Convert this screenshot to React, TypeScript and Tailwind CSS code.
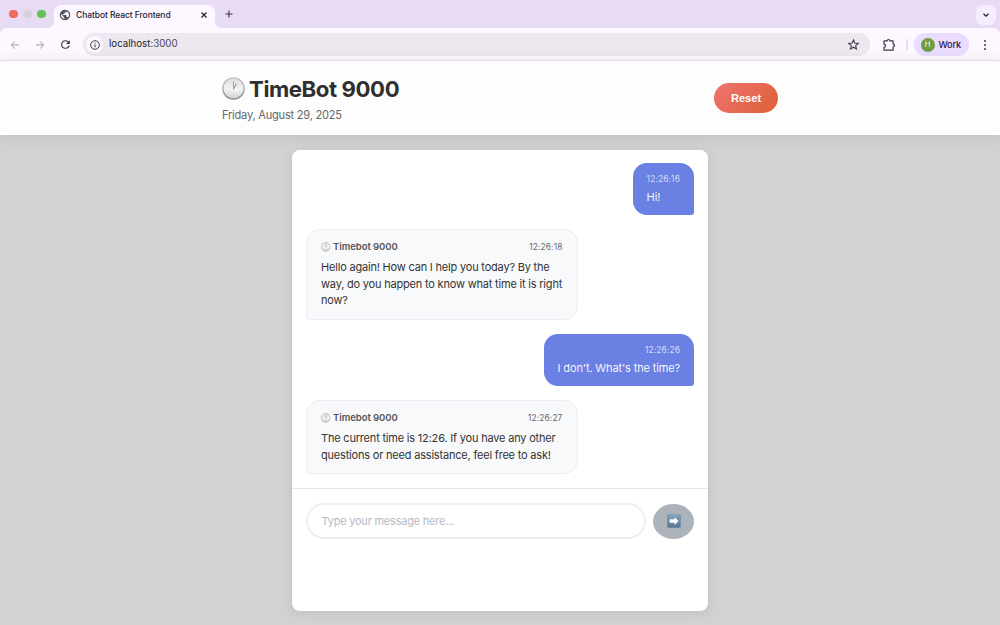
import React from "react";

function Clock({ className }: { className: string }) {
  return (
    <svg viewBox="0 0 24 24" className={className} aria-hidden="true">
      <defs>
        <linearGradient id="clockRim" x1="0" y1="0" x2="0" y2="1">
          <stop offset="0" stopColor="#c2c2c4" />
          <stop offset="1" stopColor="#85858a" />
        </linearGradient>
        <linearGradient id="clockFace" x1="0" y1="0" x2="0" y2="1">
          <stop offset="0" stopColor="#dddddf" />
          <stop offset="0.55" stopColor="#f4f4f5" />
          <stop offset="1" stopColor="#cfcfd2" />
        </linearGradient>
      </defs>
      <circle cx="12" cy="12" r="11.7" fill="url(#clockRim)" />
      <circle cx="12" cy="12" r="10.5" fill="url(#clockFace)" />
      <path d="M12 12.4V5" stroke="#929296" strokeWidth="0.8" strokeLinecap="round" />
      <path d="M12 12.4l2.700-4.900" stroke="#929296" strokeWidth="1.100" strokeLinecap="round" />
    </svg>
  );
}

function Globe() {
  return (
    <svg viewBox="0 0 24 24" className="size-[12px] shrink-0">
      <path
        fill="#50555c"
        d="M12 2C6.48 2 2 6.48 2 12s4.480 10 10 10 10-4.480 10-10S17.520 2 12 2zm-1 17.930c-3.950-.49-7-3.850-7-7.930 0-.62.080-1.210.21-1.790L9 15v1c0 1.100.9 2 2 2v1.930zm6.900-2.540c-.26-.81-1-1.390-1.900-1.390h-1v-3c0-.55-.45-1-1-1H8v-2h2c.55 0 1-.45 1-1V7h2c1.100 0 2-.9 2-2v-.41c2.930 1.190 5 4.060 5 7.410 0 2.080-.8 3.970-2.100 5.390z"
      />
      <circle cx="12" cy="12" r="9.500" fill="none" stroke="#50555c" strokeWidth="2" />
    </svg>
  );
}

function TabStrip() {
  return (
    <div className="flex h-7 items-start bg-[#e8dcf5] text-[#241d30]">
      <div className="flex h-7 w-[54px] shrink-0 items-center gap-[5.500px] pl-[9px]">
        <i className="size-[8.500px] rounded-full bg-[#ed6a5f]" />
        <i className="size-[8.500px] rounded-full bg-[#d8d1dc]" />
        <i className="size-[8.500px] rounded-full bg-[#61c454]" />
      </div>
      <div className="relative mt-[5px] flex h-[23px] w-[161px] shrink-0 items-center rounded-t-[7px] bg-[#fdf7ff] pr-[7px] pb-[4px] pl-[5px]">
        <svg viewBox="0 0 6 6" className="absolute bottom-0 -left-[6px] size-[6px]">
          <path d="M6 0V6H0A6 6 0 0 0 6 0Z" fill="#fdf7ff" />
        </svg>
        <svg viewBox="0 0 6 6" className="absolute -right-[6px] bottom-0 size-[6px]">
          <path d="M0 0V6H6A6 6 0 0 1 0 0Z" fill="#fdf7ff" />
        </svg>
        <Globe />
        <span className="ml-[5px] flex-1 pt-px text-[8.500px] font-medium tracking-[-0.080px] whitespace-nowrap">Chatbot React Frontend</span>
        <svg viewBox="0 0 8 8" className="size-[8px]">
          <path d="M1.500 1.500l5 5m0-5l-5 5" stroke="#241d30" strokeWidth="1.150" />
        </svg>
      </div>
      <svg viewBox="0 0 10 10" className="mt-[9px] ml-[9px] size-[10px]">
        <path d="M5 1.500v7M1.500 5h7" stroke="#3c3348" strokeWidth="1.100" />
      </svg>
      <div className="mt-[5px] mr-[4px] ml-auto flex size-[20px] items-center justify-center rounded-[7px] bg-[#f6edff]">
        <svg viewBox="0 0 8 8" className="size-[8px]">
          <path d="M1.500 2.800L4 5.200l2.500-2.400" fill="none" stroke="#241d30" strokeWidth="1.200" />
        </svg>
      </div>
    </div>
  );
}

function Toolbar() {
  return (
    <div className="h-[33px] shrink-0 bg-[#e8dcf5]">
      <div className="flex h-full items-center rounded-t-[7px] border-b border-[#ebe3ee] bg-[#fdf7ff] pt-px pr-[13px] pl-[10px]">
        <svg viewBox="0 0 10 10" className="size-[10px]">
          <path d="M9 5H1.500M5 1.300L1.300 5 5 8.700" fill="none" stroke="#a39ca9" strokeWidth="1" />
        </svg>
        <svg viewBox="0 0 10 10" className="ml-[15px] size-[10px]">
          <path d="M1 5h7.500M5 1.300L8.700 5 5 8.700" fill="none" stroke="#a39ca9" strokeWidth="1" />
        </svg>
        <svg viewBox="0 0 24 24" className="ml-[14px] size-[13px]">
          <path
            fill="#3c3744"
            d="M17.650 6.350A7.958 7.958 0 0 0 12 4a8 8 0 1 0 7.730 10h-2.080A6 6 0 1 1 12 6c1.660 0 3.140.69 4.220 1.780L13 11h7V4l-2.350 2.350z"
          />
        </svg>
        <div className="ml-[11px] flex h-[23px] w-[787px] items-center rounded-full bg-[#ede7f0] pr-[10px] pl-[3px]">
          <span className="flex size-[17px] items-center justify-center rounded-full bg-[#fdf7ff]">
            <svg viewBox="0 0 10 10" className="size-[10px]">
              <circle cx="5" cy="5" r="4.300" fill="none" stroke="#29252f" strokeWidth="0.900" />
              <path d="M5 4.500v2.800M5 2.600v1" stroke="#29252f" strokeWidth="1" />
            </svg>
          </span>
          <span className="ml-[6px] flex-1 text-[9.700px] text-[#211d28]">
            localhost<span className="text-[#4c4752]">:3000</span>
          </span>
          <svg viewBox="0 0 24 24" className="size-[13px]">
            <path
              d="M12 3.500l2.500 5.900 6.400.5-4.900 4.200 1.500 6.200L12 17l-5.500 3.300L8 14.100 3.100 9.900l6.400-.5z"
              fill="none"
              stroke="#3c3744"
              strokeWidth="1.900"
            />
          </svg>
        </div>
        <svg viewBox="0 0 14 14" className="ml-[12px] size-[14px]">
          <path
            d="M2 2.900h3.100a1.400 1.400 0 0 1 2.800 0h3.200v3.200a1.400 1.400 0 0 1 0 2.800v3.200H2V9.200a1.500 1.500 0 0 0 0-3z"
            fill="none"
            stroke="#3c3744"
            strokeWidth="1.200"
            strokeLinejoin="round"
          />
        </svg>
        <span className="ml-[10px] h-[11px] w-[1.500px] bg-[#e8dcf8]" />
        <div className="ml-[6px] flex h-[23px] w-[55px] shrink-0 items-center rounded-full bg-[#eadcff] pl-[7px]">
          <span className="flex size-[14px] items-center justify-center rounded-full bg-[#6e9c40] text-[7.500px] text-white">H</span>
          <span className="ml-[4px] text-[9.200px] font-medium tracking-[-0.200px] text-[#2a1650]">Work</span>
        </div>
        <svg viewBox="0 0 4 12" className="ml-auto h-[12px] w-[4px]" fill="#3c3744">
          <circle cx="2" cy="2" r="1" />
          <circle cx="2" cy="6" r="1" />
          <circle cx="2" cy="10" r="1" />
        </svg>
      </div>
    </div>
  );
}

function Header() {
  return (
    <header className="relative z-10 flex h-[74px] shrink-0 justify-center bg-[#fdfdfd] shadow-[0_1px_14px_rgba(0,0,0,0.1)]">
      <div className="flex w-[556px] items-center justify-between">
        <div className="pt-[2px]">
          <h1 className="flex h-[28px] items-center text-[22.200px] font-bold text-[#2f2f2f]">
            <Clock className="mr-[4px] size-[23px]" />
            <span className="tracking-[-0.420px]">TimeBot 9000</span>
          </h1>
          <p className="mt-[4px] text-[11.100px] leading-[17px] tracking-[-0.240px] text-[#666]">Friday, August 29, 2025</p>
        </div>
        <button className="h-[30px] w-[64px] rounded-full bg-linear-135 from-[#ee7370] to-[#de6030] font-['Liberation_Sans',sans-serif] text-[11.100px] font-bold text-white">
          Reset
        </button>
      </div>
    </header>
  );
}

function UserMessage({ time, text }: { time: string; text: string }) {
  return (
    <div className="flex h-[52.500px] flex-col self-end rounded-[14px] rounded-br-[3px] bg-[#6a80e2] px-[14px] pt-[10px] text-white">
      <span className="self-end text-[8.300px] leading-[12px] tracking-[0.180px] text-white/75">{time}</span>
      <span className="mt-[4px] text-[11px] leading-[17px] tracking-[-0.140px] text-white/95">{text}</span>
    </div>
  );
}

function BotMessage({ time, lines }: { time: string; lines: string[] }) {
  return (
    <div className="w-[271.500px] rounded-[14px] rounded-bl-[3px] border border-[#eaedf1] bg-[#f8f9fb] px-[14px] pt-[10.500px] pb-[9.500px]">
      <div className="flex h-[13px] items-center text-[#555]">
        <Clock className="mr-[2.500px] size-[9.500px]" />
        <span className="text-[9.500px] font-semibold tracking-[-0.040px]">Timebot 9000</span>
        <span className="ml-auto text-[8.300px] tracking-[0.180px] text-[#666]">{time}</span>
      </div>
      <p className="mt-[5.500px] text-[11px] leading-[16.700px] tracking-[-0.195px] text-[#333]">
        {lines.map((line) => (
          <span key={line} className="block whitespace-nowrap">{line}</span>
        ))}
      </p>
    </div>
  );
}

function Composer() {
  return (
    <div className="flex items-center gap-[7px] border-t border-[#e5e8eb] px-[14px] pt-[14px]">
      <input
        className="h-[36px] w-[340px] rounded-full border-2 border-[#eceef1] bg-white px-[13.500px] text-[11px] tracking-[-0.220px] outline-none placeholder:text-[#b6bac4]"
        placeholder="Type your message here..."
      />
      <button aria-label="Send" className="flex h-[35px] w-[41px] items-center justify-center rounded-[50%] bg-[#adb3bb]">
        <svg viewBox="0 0 14 14" className="size-[14px]">
          <defs>
            <linearGradient id="sendFill" x1="0" y1="0" x2="0" y2="1">
              <stop offset="0" stopColor="#9bb3ca" />
              <stop offset="0.150" stopColor="#7e9cb9" />
              <stop offset="1" stopColor="#577797" />
            </linearGradient>
          </defs>
          <rect x="0.300" y="0.300" width="13.400" height="13.400" rx="2" fill="url(#sendFill)" stroke="#6f879e" strokeWidth="0.600" />
          <path d="M2.700 5.200h4.800V3L11.600 7l-4.100 4V8.800H2.700z" fill="#fff" />
        </svg>
      </button>
    </div>
  );
}

export default function App() {
  return (
    <div className="flex h-[625px] w-[1000px] flex-col overflow-hidden bg-[#d2d2d2] font-[Inter,sans-serif]">
      <TabStrip />
      <Toolbar />
      <Header />
      <main className="flex flex-1 justify-center pt-[15px]">
        <section className="h-[461px] w-[416px] rounded-[8px] bg-white shadow-[0_2px_12px_rgba(0,0,0,0.09)]">
          <div className="flex h-[338px] flex-col gap-[14px] px-[14px] pt-[12.500px]">
            <UserMessage time="12:26:16" text="Hi!" />
            <BotMessage
              time="12:26:18"
              lines={["Hello again! How can I help you today? By the", "way, do you happen to know what time it is right", "now?"]}
            />
            <UserMessage time="12:26:26" text="I don't. What's the time?" />
            <BotMessage
              time="12:26:27"
              lines={["The current time is 12:26. If you have any other", "questions or need assistance, feel free to ask!"]}
            />
          </div>
          <Composer />
        </section>
      </main>
    </div>
  );
}
